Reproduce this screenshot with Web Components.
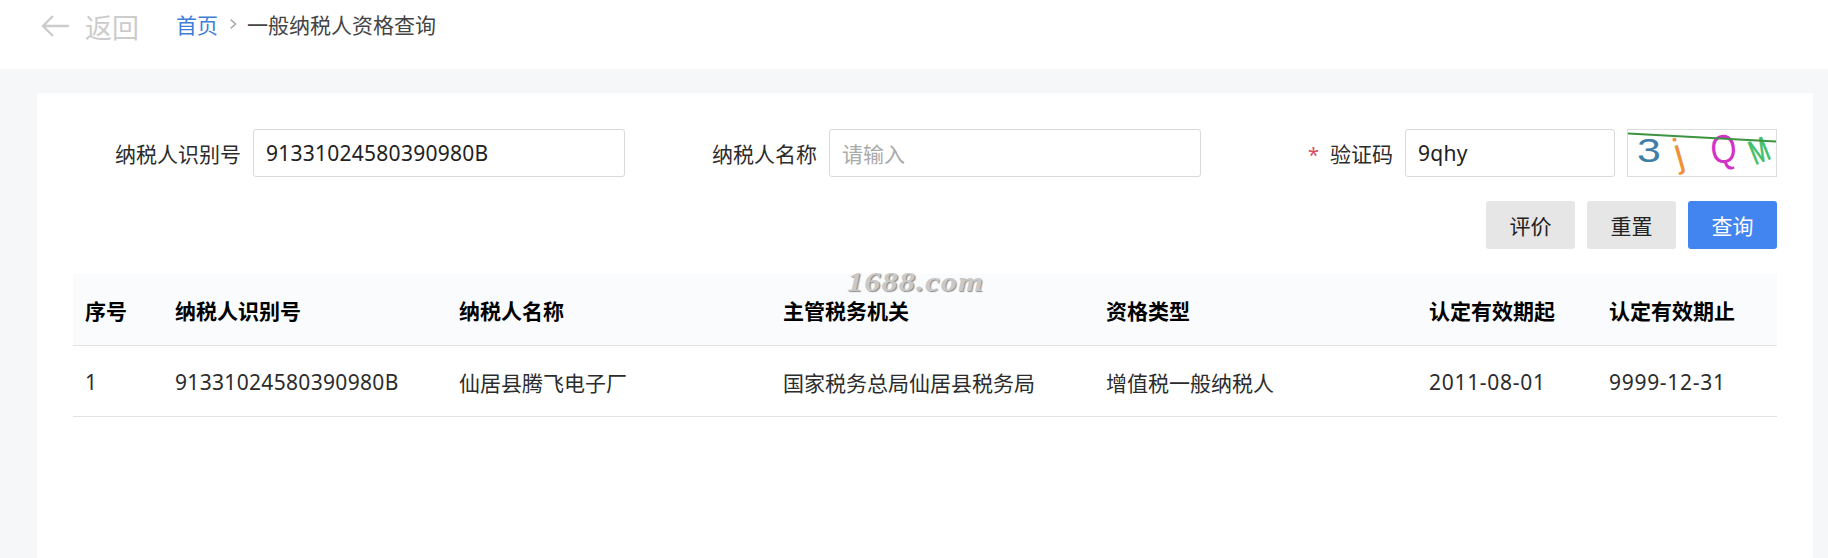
<!DOCTYPE html>
<html lang="zh-CN">
<head>
<meta charset="utf-8">
<title>一般纳税人资格查询</title>
<style>
  html, body { margin: 0; height: 100%; overflow: hidden; background: #f6f7f9; }
  body { font: 21px "Noto Sans", "Noto Sans CJK SC", sans-serif; color: #222; }
</style>
</head>
<body>
<page-header title-text="一般纳税人资格查询"></page-header>
<query-card>
  <query-field label="纳税人识别号"><text-box latin>91331024580390980B</text-box></query-field>
  <query-field label="纳税人名称"><text-box placeholder>请输入</text-box></query-field>
  <query-field label="验证码" required><text-box latin>9qhy</text-box><captcha-image></captcha-image></query-field>
  <action-button slot="actions">评价</action-button>
  <action-button slot="actions">重置</action-button>
  <action-button slot="actions" primary>查询</action-button>
  <result-table slot="result"></result-table>
</query-card>
<script>
/** Top white bar: back link + breadcrumb. */
customElements.define("page-header", class extends HTMLElement {
  constructor() {
    super();
    this.attachShadow({ mode: "open" }).innerHTML = `
      <style>
        :host { display: flex; align-items: flex-start; height: 69px; background: #fff; padding-left: 41px; box-sizing: border-box; }
        .back { display: flex; align-items: center; gap: 16px; height: 52px; color: #ccc; font-size: 27px; width: 135px; }
        .crumb { display: flex; align-items: center; height: 48px; color: #444; }
        a { color: #3f7ed8; text-decoration: none; }
        .sep { margin: 0 10px 0 11px; display: flex; }
      </style>
      <div class="back">
        <svg width="28" height="24" viewBox="0 0 28 24" fill="none" stroke="#ccc" stroke-width="2.4">
          <path d="M28 12H2M12 2 2 12l10 10"/>
        </svg>
        <span>返回</span>
      </div>
      <div class="crumb">
        <a href="#">首页</a>
        <span class="sep"><svg width="8" height="12" viewBox="0 0 8 12" fill="none" stroke="#aaa" stroke-width="1.6"><path d="m1.5 1.5 5 4.5-5 4.5"/></svg></span>
        <span>${this.getAttribute("title-text")}</span>
      </div>`;
  }
});

/** White panel holding the form, buttons and result table. */
customElements.define("query-card", class extends HTMLElement {
  constructor() {
    super();
    this.attachShadow({ mode: "open" }).innerHTML = `
      <style>
        :host { display: block; position: relative; margin: 24px 15px 0 37px; padding: 36px; background: #fff; height: 465px; box-sizing: border-box; }
        .form { display: grid; grid-template-columns: repeat(3, 552px); gap: 24px; }
        .actions { display: flex; justify-content: flex-end; gap: 12px; margin-top: 24px; margin-bottom: 25px; }
        .mark {
          position: absolute; left: 810px; top: 173px; font: italic bold 28px "Liberation Serif", serif; letter-spacing: 1px;
          color: #c9c9c9; text-shadow: 1px 1px 1px #8c8c8c; transform: scaleX(1.15); transform-origin: left center;
        }
      </style>
      <div class="form"><slot></slot></div>
      <div class="actions"><slot name="actions"></slot></div>
      <slot name="result"></slot>
      <div class="mark">1688.com</div>`;
  }
});

/** Label + control row. */
customElements.define("query-field", class extends HTMLElement {
  constructor() {
    super();
    const star = this.hasAttribute("required") ? '<i>*</i>' : "";
    this.attachShadow({ mode: "open" }).innerHTML = `
      <style>
        :host { display: flex; align-items: center; height: 48px; gap: 12px; }
        label { width: 168px; flex: none; text-align: right; color: #2c2c2c; }
        i { font-style: normal; color: #d9495c; font-size: 20px; margin-right: 11px; }
        .ctl { flex: 1; display: flex; gap: 12px; min-width: 0; }
      </style>
      <label>${star}${this.getAttribute("label")}</label>
      <div class="ctl"><slot></slot></div>`;
  }
});

/** Looks like an input; text stays real text in the slot. */
customElements.define("text-box", class extends HTMLElement {
  constructor() {
    super();
    this.attachShadow({ mode: "open" }).innerHTML = `
      <style>
        :host { flex: 1; display: flex; align-items: center; height: 48px; box-sizing: border-box; padding: 0 12px; border: 1px solid #d9d9d9; border-radius: 3px; background: #fff; color: #222; }
        :host([latin]) { letter-spacing: .25px; }
        :host([placeholder]) { color: #aaa; }
      </style>
      <slot></slot>`;
  }
});

/** The captcha picture, drawn as svg text with distortion. */
customElements.define("captcha-image", class extends HTMLElement {
  constructor() {
    super();
    this.attachShadow({ mode: "open" }).innerHTML = `
      <style>
        :host { flex: none; width: 150px; height: 48px; box-sizing: border-box; border: 1px solid #ddd; display: block; background: #fff; }
        svg { display: block; overflow: visible; }
        text { font-family: "Liberation Sans", sans-serif; }
      </style>
      <svg width="148" height="46" viewBox="0 0 148 46">
        <text transform="translate(9 32) scale(1.3 1.02)" font-size="33" fill="#3f7ea6">3</text>
        <text transform="translate(50 37) rotate(-16) scale(1 1.05)" font-size="38" fill="#f0913a">j</text>
        <text transform="translate(84 34) rotate(-6) scale(.88 1.05)" font-size="38" fill="#d232c8">Q</text>
        <text transform="translate(127 35) rotate(-22) scale(.65 1)" font-size="34" fill="#3fbf6a" stroke="#3fbf6a" stroke-width=".9">M</text>
        <path d="M0 3.5 148 11.5" stroke="#3c9440" stroke-width="2.2"/>
      </svg>`;
  }
});

customElements.define("action-button", class extends HTMLElement {
  constructor() {
    super();
    this.attachShadow({ mode: "open" }).innerHTML = `
      <style>
        :host { display: flex; align-items: center; justify-content: center; width: 89px; height: 48px; border-radius: 3px; background: #e6e6e6; color: #222; }
        :host([primary]) { background: #4285f0; color: #fff; }
      </style>
      <slot></slot>`;
  }
});

/** Result list; the rows live here as data. */
const columns = [
  ["序号", 90], ["纳税人识别号", 284], ["纳税人名称", 324], ["主管税务机关", 323],
  ["资格类型", 323], ["认定有效期起", 180], ["认定有效期止", 180],
];
const rows = [
  ["1", "91331024580390980B", "仙居县腾飞电子厂", "国家税务总局仙居县税务局", "增值税一般纳税人", "2011-08-01", "9999-12-31"],
];
const tracking = (v) => (/^\d{4}-/.test(v) ? "num date" : /^\d/.test(v) ? "num" : "");
customElements.define("result-table", class extends HTMLElement {
  constructor() {
    super();
    this.attachShadow({ mode: "open" }).innerHTML = `
      <style>
        :host { display: block; }
        table { width: 100%; border-collapse: collapse; table-layout: fixed; }
        th, td { padding: 0 12px; text-align: left; border-bottom: 1px solid #e2e2e2; white-space: nowrap; }
        th { height: 71px; background: #fafbfc; font-weight: 700; color: #000; }
        td { height: 71px; color: #2c2c2c; padding-top: 2px; box-sizing: border-box; }
        .num { letter-spacing: .32px; }
        .date { letter-spacing: .7px; }
      </style>
      <table>
        <colgroup>${columns.map((c) => `<col style="width:${c[1]}px">`).join("")}</colgroup>
        <thead><tr>${columns.map((c) => `<th>${c[0]}</th>`).join("")}</tr></thead>
        <tbody>${rows.map((r) => `<tr>${r.map((v) => `<td class="${tracking(v)}">${v}</td>`).join("")}</tr>`).join("")}</tbody>
      </table>`;
  }
});
</script>
</body>
</html>
